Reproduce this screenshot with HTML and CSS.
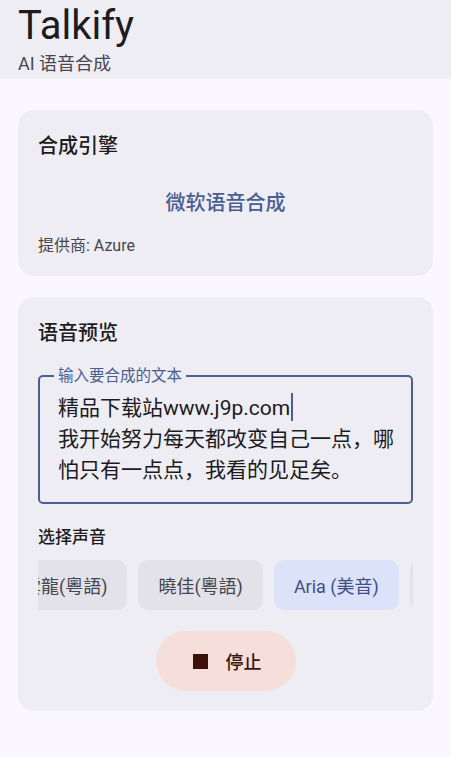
FILE: index.html
```html
<!DOCTYPE html>
<html lang="zh">
<head>
<meta charset="utf-8">
<title>Talkify</title>
<link rel="stylesheet" href="styles.css">
</head>
<body>
<header class="app-bar">
  <div class="app-title">Talkify</div>
  <div class="app-subtitle">AI 语音合成</div>
</header>
<main class="content">
  <section class="card">
    <h2 class="card-title">合成引擎</h2>
    <div class="engine-row">
      <button class="text-btn">微软语音合成</button>
    </div>
    <div class="provider">提供商: Azure</div>
  </section>
  <section class="card">
    <h2 class="card-title">语音预览</h2>
    <div class="field">
      <span class="field-label">输入要合成的文本</span>
      <div class="field-text">精品下载站www.j9p.com<span class="cursor"></span><br>我开始努力每天都改变自己一点，哪<br>怕只有一点点，我看的见足矣。</div>
    </div>
    <h3 class="section-label">选择声音</h3>
    <div class="chips-viewport">
      <div class="chips">
        <div class="chip chip-first">雲龍(粵語)</div>
        <div class="chip">曉佳(粵語)</div>
        <div class="chip chip-selected">Aria (美音)</div>
        <div class="chip">Jenny (美音)</div>
      </div>
    </div>
    <div class="action-row">
      <button class="stop-btn"><span class="stop-icon"></span><span>停止</span></button>
    </div>
  </section>
</main>
</body>
</html>
```

FILE: styles.css
```css
* { box-sizing: border-box; }
html, body {
  margin: 0;
  padding: 0;
}
body {
  background: #faf8fe;
  font-family: "Roboto", "Noto Sans CJK SC", sans-serif;
  color: #1b1b21;
  width: 451px;
  min-height: 757px;
}
.app-bar {
  background: #eeedf3;
  height: 79px;
  padding: 3px 18px 0;
}
.app-title {
  font-size: 40px;
  line-height: 46px;
  color: #1b1b21;
}
.app-subtitle {
  font-size: 18px;
  line-height: 24px;
  margin-top: 3px;
  color: #46464f;
}
.content {
  padding: 31px 18px;
  display: flex;
  flex-direction: column;
  gap: 21px;
}
.card {
  background: #eeedf3;
  border-radius: 16px;
  padding: 22px 20px 20px;
}
.card-title {
  margin: 0;
  font-size: 20px;
  line-height: 28px;
  font-weight: 500;
  color: #1b1b21;
}
.engine-row {
  display: flex;
  justify-content: center;
  margin-top: 21px;
}
.text-btn {
  height: 40px;
  border: none;
  background: transparent;
  font-family: inherit;
  font-size: 20px;
  font-weight: 500;
  color: #4a5c92;
  padding: 0 10px;
  border-radius: 20px;
}
.provider {
  margin-top: 15px;
  font-size: 16px;
  line-height: 20px;
  color: #45464f;
}
.field {
  position: relative;
  margin-top: 28px;
  border: 2px solid #4e5e90;
  border-radius: 5px;
  padding: 16px 10px 16px 18px;
}
.field-label {
  position: absolute;
  left: 14px;
  top: -11px;
  padding: 0 4px;
  background: #eeedf3;
  font-size: 15.5px;
  line-height: 20px;
  color: #4a5c92;
}
.field-text {
  font-size: 21px;
  line-height: 31px;
  color: #1b1b21;
  white-space: nowrap;
}
.cursor {
  display: inline-block;
  width: 2px;
  height: 28px;
  background: #4e5e90;
  vertical-align: -6px;
  margin-left: 1px;
}
.section-label {
  margin: 21px 0 0;
  font-size: 17px;
  line-height: 24px;
  font-weight: 500;
  color: #1b1b21;
}
.chips-viewport {
  margin-top: 11px;
  overflow: hidden;
}
.chips {
  display: flex;
  gap: 11px;
}
.chip {
  flex: none;
  height: 50px;
  padding: 0 20px;
  border-radius: 10px;
  background: #e3e2e9;
  display: flex;
  align-items: center;
  font-size: 18px;
  color: #45464f;
  white-space: nowrap;
}
.chip-first {
  margin-left: -35px;
}
.chip-selected {
  background: #dce2fa;
  color: #3f5083;
}
.action-row {
  display: flex;
  justify-content: center;
  margin-top: 21px;
}
.stop-btn {
  height: 60px;
  border: none;
  border-radius: 30px;
  background: #f6dfda;
  padding: 0 34px 0 37px;
  display: flex;
  align-items: center;
  gap: 18px;
  font-family: inherit;
  font-size: 18px;
  font-weight: 500;
  color: #3a1512;
}
.stop-icon {
  width: 15px;
  height: 15px;
  background: #3c110c;
  display: block;
}
```
